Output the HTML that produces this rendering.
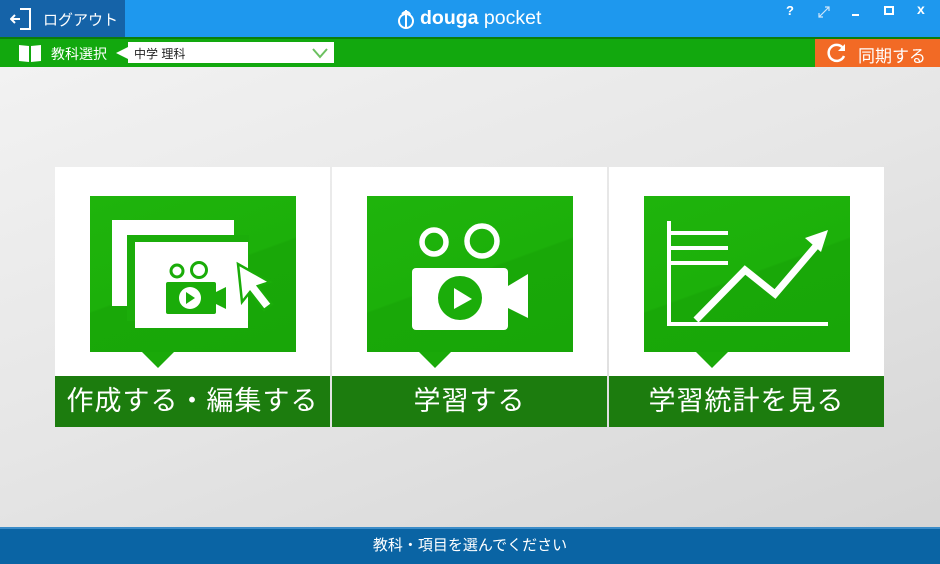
<!DOCTYPE html>
<html><head><meta charset="utf-8"><style>
*{margin:0;padding:0;box-sizing:border-box}
body{width:940px;height:564px;overflow:hidden;position:relative;font-family:"Liberation Sans","Noto Sans CJK JP",sans-serif;background:linear-gradient(160deg,#f4f4f4 0%,#e6e6e6 50%,#d4d4d4 100%)}
.abs{position:absolute}
.card{position:absolute;top:167px;width:275px;height:260px;background:#fff}
.panel{position:absolute;left:35px;top:29px;width:206px;height:156px;background:linear-gradient(160deg,#1fb40c 0%,#1cb00a 50%,#19a808 51%,#18a608 100%)}
.ptr{position:absolute;left:103px;top:185px;margin-left:-16px;width:0;height:0;border-left:16px solid transparent;border-right:16px solid transparent;border-top:16px solid #1aa909}
.lbl{position:absolute;left:0;top:209px;width:275px;height:51px;background:#1c7c0e;color:#fff;font-size:27px;text-align:center;line-height:50px;letter-spacing:1px}
</style></head><body>
<div class="abs" style="left:0;top:0;width:940px;height:37px;background:#1e98ee"></div>
<div class="abs" style="left:0;top:0;width:125px;height:37px;background:#1563a8"></div>
<svg class="abs" style="left:10px;top:7px" width="26" height="24"><path d="M10 2h10v20H10" fill="none" stroke="#fff" stroke-width="2"/><path d="M1 12h9M5 8l-4 4 4 4" fill="none" stroke="#fff" stroke-width="2"/></svg>
<div class="abs" style="left:43px;top:9px;color:#fff;font-size:15px">ログアウト</div>
<svg class="abs" style="left:396px;top:8px" width="20" height="22"><circle cx="10" cy="13" r="7" fill="none" stroke="#fff" stroke-width="2"/><path d="M10 2v18M6 6c4-4 8-2 8 2" fill="none" stroke="#fff" stroke-width="2"/></svg>
<div class="abs" style="left:420px;top:7px;color:#fff;font-size:19.5px"><b>douga</b> pocket</div>
<div class="abs" style="left:786px;top:3px;color:#fff;font-size:13px;font-weight:bold">?</div>
<svg class="abs" style="left:817px;top:5px" width="14" height="14"><path d="M2 12L12 2M8 2h4v4M2 8v4h4" fill="none" stroke="#cfe6fa" stroke-width="1.2"/></svg>
<div class="abs" style="left:852px;top:14px;width:7px;height:2px;background:#fff"></div>
<div class="abs" style="left:884px;top:6px;width:10px;height:9px;border:2px solid #fff"></div>
<div class="abs" style="left:917px;top:1px;color:#fff;font-size:14px;font-weight:bold">x</div>
<div class="abs" style="left:0;top:37px;width:940px;height:30px;background:#12a80e;border-top:2px solid #0c7d0a"></div>
<svg class="abs" style="left:18px;top:43px" width="24" height="20"><path d="M1 2l10 1v16L1 18zM13 3l10-1v16l-10 1z" fill="#fff"/></svg>
<div class="abs" style="left:51px;top:44px;color:#fff;font-size:14px">教科選択</div>
<div class="abs" style="left:116px;top:47px;border-right:12px solid #fff;border-top:6px solid transparent;border-bottom:6px solid transparent"></div>
<div class="abs" style="left:128px;top:42px;width:206px;height:21px;background:#fff;font-size:12px;padding:3px 6px;color:#222">中学 理科</div>
<svg class="abs" style="left:312px;top:47px" width="16" height="12"><path d="M1 2l7 8 7-8" fill="none" stroke="#6cc060" stroke-width="2"/></svg>
<div class="abs" style="left:815px;top:39px;width:125px;height:28px;background:#f26a25"></div>
<svg class="abs" style="left:826px;top:42px" width="22" height="22"><path d="M17 6a8 8 0 1 0 1 8" fill="none" stroke="#fff" stroke-width="2.5"/><path d="M19 2v7h-7" fill="#fff"/></svg>
<div class="abs" style="left:858px;top:42px;color:#fff;font-size:17px">同期する</div>

<div class="card" style="left:55px"><div class="panel">
<svg width="206" height="156"><rect x="22" y="24" width="122" height="86" fill="#fff"/><rect x="37" y="39" width="122" height="86" fill="#1bad0a"/><rect x="45" y="46" width="113" height="86" fill="#fff"/>
<circle cx="87" cy="75" r="6" fill="none" stroke="#1aac09" stroke-width="3"/><circle cx="109" cy="74" r="7.5" fill="none" stroke="#1aac09" stroke-width="3"/><rect x="76" y="86" width="50" height="32" rx="2" fill="#1aac09"/><path d="M126 96l10-5v22l-10-5z" fill="#1aac09"/><circle cx="100" cy="102" r="11" fill="#fff"/><path d="M96 96v12l9-6z" fill="#1aac09"/>
<path d="M148 68l4 38 8-10 14 18 8-6-14-18 12-4z" fill="#fff" stroke="#1aac09" stroke-width="2.5"/></svg></div><div class="ptr"></div><div class="lbl">作成する・編集する</div></div>

<div class="card" style="left:332px"><div class="panel">
<svg width="206" height="156"><circle cx="67" cy="46" r="12" fill="none" stroke="#fff" stroke-width="5.5"/><circle cx="115" cy="45" r="15" fill="none" stroke="#fff" stroke-width="5.5"/><rect x="45" y="72" width="96" height="62" rx="4" fill="#fff"/><path d="M141 90l20-12v44l-20-10z" fill="#fff"/><circle cx="93" cy="102" r="22" fill="#1bad0a"/><path d="M87 92v21l18-10z" fill="#fff"/></svg></div><div class="ptr"></div><div class="lbl">学習する</div></div>

<div class="card" style="left:609px"><div class="panel">
<svg width="206" height="156"><path d="M25 25v103h159" fill="none" stroke="#fff" stroke-width="4"/><path d="M25 37h59M25 52h59M25 67h59" stroke="#fff" stroke-width="4"/><path d="M52 124l49-50 30 24 41-48" fill="none" stroke="#fff" stroke-width="7"/><path d="M184 34l-23 8 16 14z" fill="#fff"/></svg></div><div class="ptr"></div><div class="lbl">学習統計を見る</div></div>

<div class="abs" style="left:0;top:527px;width:940px;height:37px;background:#0a64a4;border-top:2px solid #3b8cc8;color:#fff;font-size:15px;text-align:center;line-height:34px">教科・項目を選んでください</div>
</body></html>
